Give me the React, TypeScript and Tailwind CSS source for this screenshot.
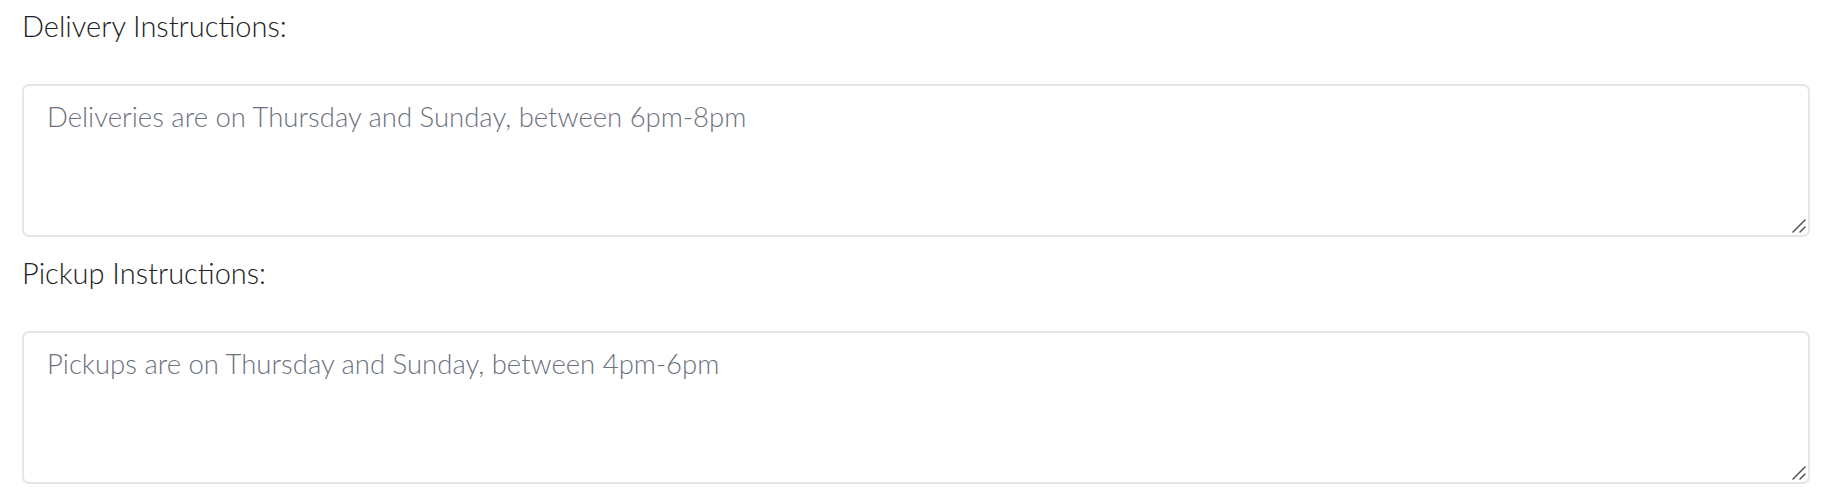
import React from "react";

const fields = [
  { label: "Delivery Instructions:", placeholder: "Deliveries are on Thursday and Sunday, between 6pm-8pm" },
  { label: "Pickup Instructions:", placeholder: "Pickups are on Thursday and Sunday, between 4pm-6pm" },
];

// textarea grip, drawn to match the bigger handle in the design
const Grip = () => (
  <svg
    className="pointer-events-none absolute bottom-[3px] right-[3px] h-[16px] w-[16px]"
    viewBox="0 0 16 16"
    fill="none"
    stroke="#5a5a5a"
    strokeWidth="1.6"
    strokeLinecap="round"
  >
    <line x1="2" y1="14" x2="14" y2="2" />
    <line x1="9" y1="14" x2="14" y2="9" />
  </svg>
);

const App = () => {
  return (
    <div className="min-h-screen w-full bg-white px-[22px] font-['Lato',sans-serif]">
      {fields.map((field, index) => (
        <div key={index} className="flex flex-col pb-[10px]">
          <label className="pt-[5px] pb-[37px] text-[29px] font-light leading-[42px] text-[#222]">
            {field.label}
          </label>
          <div className="relative h-[153px] w-[1788px]">
            <textarea
              placeholder={field.placeholder}
              className="block h-full w-full resize-none rounded-[7px] border-2 border-[#e4e6e9] bg-white px-[23px] py-[12px] text-[27.5px] font-light leading-[38px] text-[#333] placeholder:text-[#6c727d] focus:outline-none"
            />
            <Grip />
          </div>
        </div>
      ))}
    </div>
  );
};

export default App;
